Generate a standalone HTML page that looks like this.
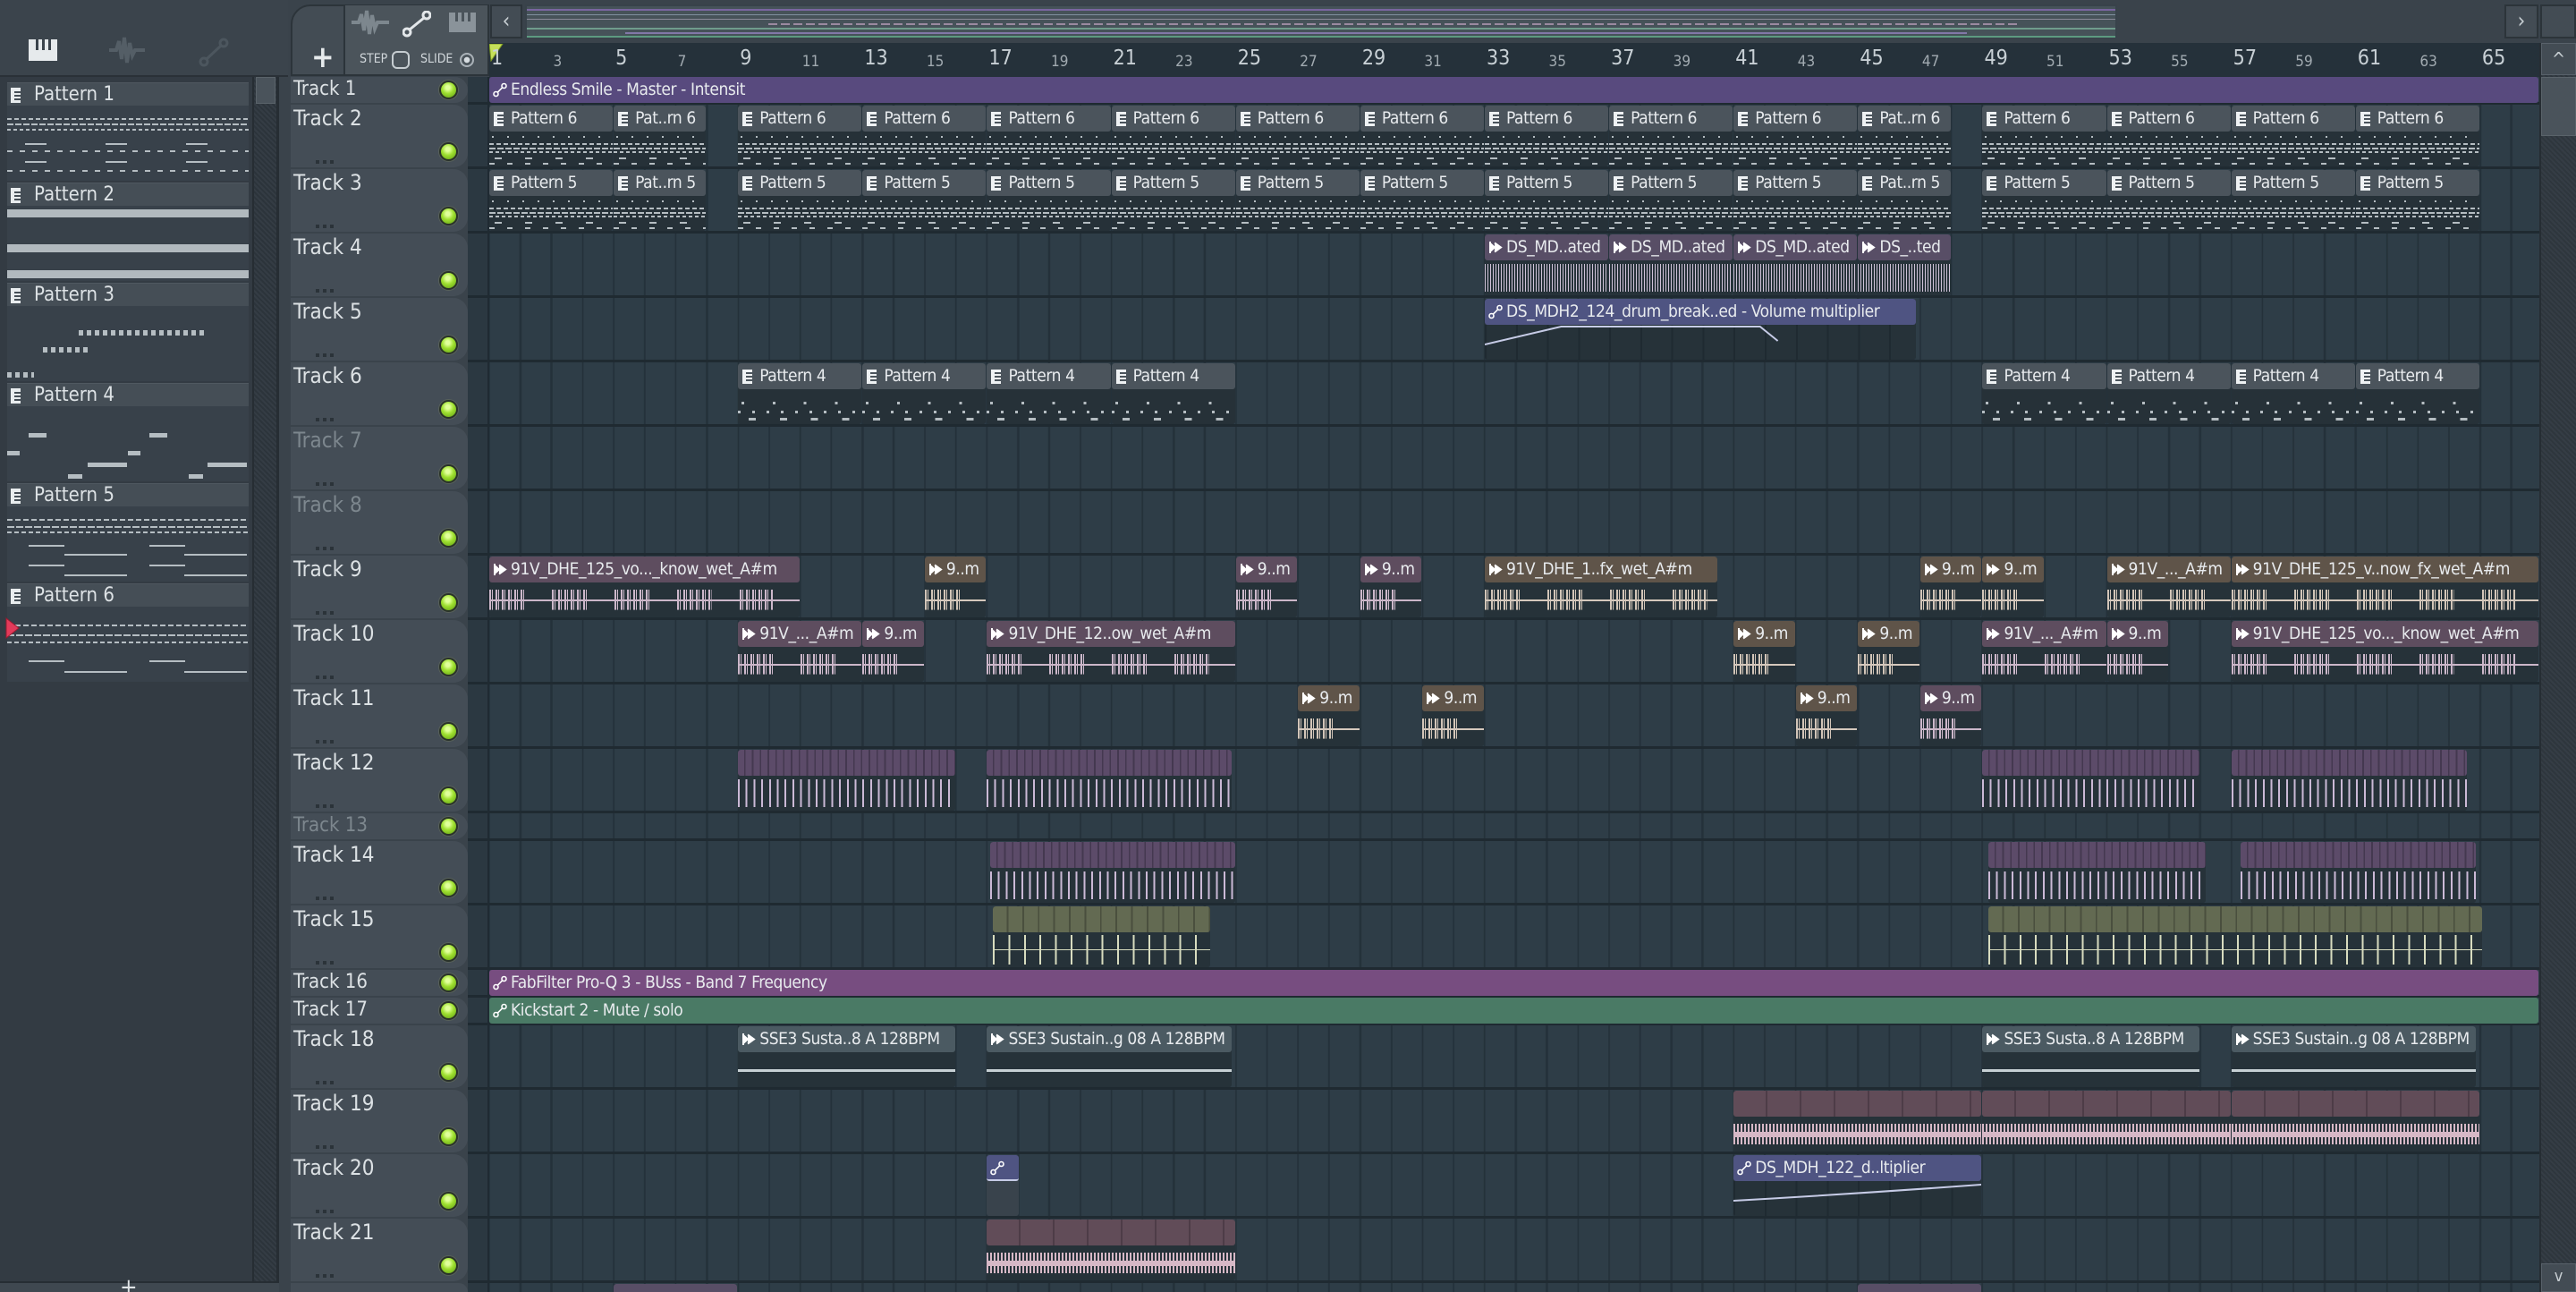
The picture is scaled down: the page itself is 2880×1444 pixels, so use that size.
<!DOCTYPE html>
<html><head><meta charset="utf-8">
<style>
*{box-sizing:border-box;margin:0;padding:0}
html{width:2880px;height:1444px;overflow:hidden}
body{width:2880px;height:1444px;overflow:hidden;background:#3a434b;position:relative;font-family:"DejaVu Sans Condensed","Liberation Sans Narrow","Liberation Sans",sans-serif;color:#dfe3e6}
.abs{position:absolute}
#lp{left:0;top:86px;width:282px;height:1346px;background:#333b43}
#lsb{left:282px;top:86px;width:30px;height:1346px;background:repeating-linear-gradient(45deg,#2c343b 0 2px,#343c44 2px 4px);border-left:2px solid #262d33;border-right:3px solid #262d33}
#lsb div{position:absolute;left:2px;top:0;width:22px;height:30px;background:#4a535b;border:1px solid #5a636a}
.pi{position:absolute;left:8px;width:270px}
.pi .ph{height:26px;background:#454e56;font-size:22px;line-height:26px;padding-left:30px;color:#dde2e5;position:relative;border-top:1px solid #4f5860}
.pi .pb{height:84px;background:#38414a}
.ico{position:absolute;left:4px;top:5px;width:11px;height:17px;background:linear-gradient(#454e56,#454e56) 4px 4px/7px 2px no-repeat,linear-gradient(#454e56,#454e56) 4px 8px/7px 2px no-repeat,linear-gradient(#454e56,#454e56) 4px 12px/7px 2px no-repeat,#e8ecee}
#grid{left:525px;top:86px;width:2314px;height:1358px;background:repeating-linear-gradient(90deg,#24313a 0 2px,transparent 2px 34.78px) 21px 0/100% 100%,#2e3d47}
#gstrip{left:523px;top:86px;width:24px;height:1358px;background:#2b3841;border-right:2px solid #1f2a32}
.r{position:absolute;left:0;width:2839px}
.sep{position:absolute;left:523px;right:0;bottom:0;height:3px;background:#1f2a31}
.th{position:absolute;left:325px;width:198px;top:0;bottom:2px;background:#444d56;border-radius:0 16px 16px 0}
.th b{font-weight:normal;position:absolute;left:3px;top:1px;font-size:24px;line-height:28px;color:#dce1e4;white-space:nowrap}
.th.g b{color:#7d878e}
.th i{position:absolute;left:28px;bottom:4px;width:22px;height:4px;background:repeating-linear-gradient(90deg,#2b3339 0 4px,transparent 4px 8px)}
.led{position:absolute;left:166px;bottom:7px;width:21px;height:21px;border-radius:50%;background:radial-gradient(circle at 45% 35%,#e0ff9a 0 15%,#9fe030 45%,#5d9a12 100%);border:2px solid #2a3329;box-shadow:0 0 0 1px #58615a}
.sm .led{bottom:4px}
.sm .th b{font-size:22px;top:0}
.c{position:absolute;left:calc(547px + (var(--a) - 1) * 34.78px);width:calc((var(--b) - var(--a)) * 34.78px - 1px);top:1px;bottom:3px;background:#263239;overflow:hidden;border-radius:3px}
.c .h{height:29px;line-height:29px;font-size:19px;letter-spacing:-0.4px;color:#e8ebee;white-space:nowrap;padding-left:24px;border-radius:3px;position:relative;overflow:hidden}
.c .h svg{position:absolute;left:4px;top:6px;width:16px;height:17px}
.bd{position:absolute;left:0;right:0;top:29px;bottom:0;background:repeating-linear-gradient(90deg,#1f2a31 0 2px,transparent 2px 34.78px)}
.p .h{background:#4b545c}
.p .bd{background:
repeating-linear-gradient(90deg,#b5bdc2 0 5px,transparent 5px 8px) 0 13px/100% 2px no-repeat,
repeating-linear-gradient(90deg,#b5bdc2 0 7px,transparent 7px 9px) 0 18px/100% 2px no-repeat,
repeating-linear-gradient(90deg,#b5bdc2 0 4px,transparent 4px 7px) 0 22px/100% 2px no-repeat,
repeating-linear-gradient(90deg,transparent 0 3px,#b5bdc2 3px 5px,transparent 5px 17px) 0 5px/100% 2px no-repeat,
repeating-linear-gradient(90deg,transparent 0 6px,#b5bdc2 6px 14px,transparent 14px 34px) 0 29px/100% 2px no-repeat,
repeating-linear-gradient(90deg,#b5bdc2 0 6px,transparent 6px 20px) 0 35px/100% 2px no-repeat,
#263138}
.p4 .bd{background:
repeating-linear-gradient(90deg,transparent 0 4px,#b5bdc2 4px 7px,transparent 7px 34.78px) 0 14px/100% 3px no-repeat,
repeating-linear-gradient(90deg,#b5bdc2 0 3px,transparent 3px 16px) 0 24px/100% 3px no-repeat,
repeating-linear-gradient(90deg,transparent 0 12px,#b5bdc2 12px 20px,transparent 20px 34.78px) 0 32px/100% 3px no-repeat,#263138}
.au .h{background:#5e4d5f}
.tan .h{background:#5f5449}
.ds .h{background:#584e66}
.w{background:linear-gradient(#cbb6c9,#cbb6c9) 0 50%/100% 2px no-repeat,repeating-linear-gradient(90deg,transparent 0 40px,#263239 40px 69.56px) 0 50%/100% 70% no-repeat,repeating-linear-gradient(90deg,#cdb8cb 0 2px,transparent 2px 3px,#cdb8cb 3px 4px,transparent 4px 7px) 0 50%/100% 58% no-repeat,#263239}
.tan .w{background:linear-gradient(#d5c8bc,#d5c8bc) 0 50%/100% 2px no-repeat,repeating-linear-gradient(90deg,transparent 0 40px,#263239 40px 69.56px) 0 50%/100% 70% no-repeat,repeating-linear-gradient(90deg,#d2c5b8 0 2px,transparent 2px 3px,#d2c5b8 3px 4px,transparent 4px 7px) 0 50%/100% 58% no-repeat,#263239}
.ds .w{background:repeating-linear-gradient(90deg,#cfc2d8 0 1px,transparent 1px 3px) 0 50%/100% 80% no-repeat,#263239}
.aut .h{background:#4f5482}
.sse .h{background:#4b5a62}
.sse .bd{background:linear-gradient(#c7d0d4,#c7d0d4) 0 19px/100% 3px no-repeat,#263239}
.seg .h{background:repeating-linear-gradient(90deg,#5c4b69 0 7px,#443850 7px 8.7px);padding:0}
.seg .bd{background:repeating-linear-gradient(90deg,#cbb9d6 0 2px,transparent 2px 8.7px) 0 50%/100% 80% no-repeat,#263239}
.ol .h{background:repeating-linear-gradient(90deg,#636a52 0 15.5px,#4a4f3e 15.5px 17.39px);padding:0}
.ol .bd{background:repeating-linear-gradient(90deg,#d8dcbf 0 2px,transparent 2px 17.39px) 0 50%/100% 85% no-repeat,linear-gradient(#d8dcbf,#d8dcbf) 0 50%/100% 1px no-repeat,#263239}
.pk .h{background:repeating-linear-gradient(90deg,#614c58 0 36px,#4d3c47 36px 38px);padding:0}
.pk .bd{background:repeating-linear-gradient(90deg,#d6b8c6 0 2px,transparent 2px 4px) 0 50%/100% 60% no-repeat,linear-gradient(#d6b8c6,#d6b8c6) 0 50%/100% 6px no-repeat,#263239}
.full{top:0;bottom:2px;border-radius:3px}
.full .h{height:100%;line-height:28px}
.ru{position:absolute;top:52px;left:calc(549px + (var(--n) - 1) * 34.78px);font-size:23px;color:#c8d0d5}
.ru.s{font-size:17px;top:59px;color:#a2abb1}
</style></head><body>
<svg width="0" height="0" style="position:absolute">
<defs>
<symbol id="ia" viewBox="0 0 16 17"><path d="M2 2V15M2 8.5H14M7 3.5L14 8.5L7 13.5M2 4L7 8.5L2 13" stroke="#fff" stroke-width="2" fill="#fff"/></symbol>
<symbol id="iu" viewBox="0 0 16 17"><circle cx="3.5" cy="13" r="2.5" stroke="#fff" stroke-width="1.6" fill="none"/><circle cx="12.5" cy="4" r="2.5" stroke="#fff" stroke-width="1.6" fill="none"/><path d="M5.3 11.2L10.7 5.8" stroke="#fff" stroke-width="1.6"/></symbol>
<symbol id="ip" viewBox="0 0 16 17"><rect x="1" y="1" width="11" height="16" fill="#eef1f3"/><path d="M5 5H12M5 9H12M5 13H12" stroke="#4b545c" stroke-width="2"/></symbol>
</defs></svg>

<div class="abs" style="left:0;top:0;width:2880px;height:48px;background:#3a434b"></div>
<div class="abs" style="left:0;top:0;width:322px;height:86px;background:#3b444c;border-bottom:2px solid #2a3137"></div>
<div class="abs" style="left:32px;top:44px;width:32px;height:24px;background:linear-gradient(#3b444c,#3b444c) 8px 0/3px 12px no-repeat,linear-gradient(#3b444c,#3b444c) 15px 0/3px 12px no-repeat,linear-gradient(#3b444c,#3b444c) 22px 0/3px 12px no-repeat,#e6eaec"></div>
<svg class="abs" style="left:120px;top:40px" width="44" height="32"><path d="M2 16H10L13 6L16 26L19 2L22 30L25 8L28 22L31 16H42" stroke="#545e66" stroke-width="4" fill="none"/></svg>
<svg class="abs" style="left:222px;top:42px" width="34" height="34"><circle cx="6" cy="27" r="4" stroke="#4c565e" stroke-width="3" fill="none"/><circle cx="28" cy="6" r="4" stroke="#4c565e" stroke-width="3" fill="none"/><path d="M9 24L25 9" stroke="#4c565e" stroke-width="3"/></svg>

<div class="abs" style="left:325px;top:5px;width:222px;height:80px;background:#434c54;border-radius:22px 0 0 0;border:2px solid #2c343a"></div>
<div class="abs" style="left:384px;top:6px;width:161px;height:77px;background:#4b545b;border-left:2px solid #2c343a"></div>
<div class="abs" style="left:348px;top:44px;font-size:34px;color:#e6eaec;font-weight:bold">+</div>
<svg class="abs" style="left:393px;top:10px" width="42" height="30"><path d="M0 15H8L11 6L14 24L17 2L20 28L23 7L26 22L29 15H42" stroke="#7d878e" stroke-width="4" fill="none"/></svg>
<svg class="abs" style="left:450px;top:12px" width="32" height="30"><circle cx="5" cy="24" r="4" stroke="#e3e7ea" stroke-width="3" fill="none"/><circle cx="27" cy="5" r="4" stroke="#e3e7ea" stroke-width="3" fill="none"/><path d="M8 21L24 8" stroke="#e3e7ea" stroke-width="3"/></svg>
<div class="abs" style="left:502px;top:14px;width:30px;height:22px;background:linear-gradient(#4b545b,#4b545b) 7px 0/3px 10px no-repeat,linear-gradient(#4b545b,#4b545b) 14px 0/3px 10px no-repeat,linear-gradient(#4b545b,#4b545b) 21px 0/3px 10px no-repeat,#8a939a"></div>
<div class="abs" style="left:402px;top:58px;font-size:14px;color:#d0d6da">STEP</div>
<div class="abs" style="left:438px;top:57px;width:20px;height:20px;border:2px solid #c6cdd1;border-radius:6px"></div>
<div class="abs" style="left:470px;top:58px;font-size:14px;color:#d0d6da">SLIDE</div>
<div class="abs" style="left:514px;top:59px;width:16px;height:16px;border:2px solid #aab2b8;border-radius:50%;background:radial-gradient(#d6dce0 0 3px,transparent 3.5px)"></div>

<div class="abs" style="left:548px;top:5px;width:36px;height:38px;background:#434c54;border:2px solid #2c343a;font-size:24px;line-height:32px;text-align:center;color:#c9d0d4">&lsaquo;</div>
<div class="abs" style="left:587px;top:5px;width:1780px;height:38px;background:#465259;border:2px solid #38424a">
 <div class="abs" style="left:0;top:3px;width:1776px;height:2px;background:#7a66a0"></div>
 <div class="abs" style="left:0;top:9px;width:1776px;height:1px;background:#8190a0"></div>
 <div class="abs" style="left:0;top:14px;width:1776px;height:1px;background:#8a8a9a"></div>
 <div class="abs" style="left:270px;top:19px;width:1400px;height:2px;background:repeating-linear-gradient(90deg,#9b8aa0 0 10px,transparent 10px 14px)"></div>
 <div class="abs" style="left:0;top:24px;width:1776px;height:2px;background:#6f9c8c"></div>
 <div class="abs" style="left:110px;top:29px;width:1500px;height:2px;background:#8278a8"></div>
 <div class="abs" style="left:0;top:33px;width:1776px;height:2px;background:#5d9a80"></div>
</div>
<div class="abs" style="left:2800px;top:5px;width:38px;height:38px;background:#434c54;border:2px solid #2c343a;font-size:24px;line-height:32px;text-align:center;color:#c9d0d4">&rsaquo;</div>
<div class="abs" style="left:2840px;top:5px;width:40px;height:38px;background:#434c54;border:2px solid #2c343a"></div>

<div class="abs" style="left:547px;top:48px;width:2292px;height:38px;background:#25313a"></div>
<svg class="abs" style="left:547px;top:49px" width="16" height="20"><path d="M0 0H15L2 19Z" fill="#c6e05a" stroke="#7d9a20"/></svg>
<span class="ru" style="--n:1">1</span><span class="ru s" style="--n:3">3</span><span class="ru" style="--n:5">5</span><span class="ru s" style="--n:7">7</span><span class="ru" style="--n:9">9</span><span class="ru s" style="--n:11">11</span><span class="ru" style="--n:13">13</span><span class="ru s" style="--n:15">15</span><span class="ru" style="--n:17">17</span><span class="ru s" style="--n:19">19</span><span class="ru" style="--n:21">21</span><span class="ru s" style="--n:23">23</span><span class="ru" style="--n:25">25</span><span class="ru s" style="--n:27">27</span><span class="ru" style="--n:29">29</span><span class="ru s" style="--n:31">31</span><span class="ru" style="--n:33">33</span><span class="ru s" style="--n:35">35</span><span class="ru" style="--n:37">37</span><span class="ru s" style="--n:39">39</span><span class="ru" style="--n:41">41</span><span class="ru s" style="--n:43">43</span><span class="ru" style="--n:45">45</span><span class="ru s" style="--n:47">47</span><span class="ru" style="--n:49">49</span><span class="ru s" style="--n:51">51</span><span class="ru" style="--n:53">53</span><span class="ru s" style="--n:55">55</span><span class="ru" style="--n:57">57</span><span class="ru s" style="--n:59">59</span><span class="ru" style="--n:61">61</span><span class="ru s" style="--n:63">63</span><span class="ru" style="--n:65">65</span>

<div class="abs" style="left:2839px;top:48px;width:41px;height:1396px;background:repeating-linear-gradient(45deg,#2e363d 0 2px,#353d45 2px 4px);border-left:2px solid #262d33"></div>
<div class="abs" style="left:2841px;top:48px;width:39px;height:36px;background:#434c54;border:1px solid #58616a;text-align:center;font-size:20px;line-height:34px;color:#c9d0d4">^</div>
<div class="abs" style="left:2841px;top:86px;width:39px;height:66px;background:#4a535b;border:1px solid #5a636a"></div>
<div class="abs" style="left:2841px;top:1412px;width:39px;height:32px;background:#434c54;border:1px solid #58616a;text-align:center;font-size:18px;line-height:28px;color:#c9d0d4">v</div>

<div id="lp" class="abs"></div>
<div id="lsb" class="abs"><div></div></div>
<div class="abs" style="left:0;top:1432px;width:312px;height:12px;background:#3f4850;border-top:2px solid #262d33"></div>
<div class="abs" style="left:134px;top:1424px;font-size:26px;color:#dfe3e6">+</div>

<div class="pi" style="top:92px"><div class="ph"><span class="ico"></span>Pattern 1</div><div class="pb" style="background:
repeating-linear-gradient(90deg,#b5bdc2 0 5px,transparent 5px 8px) 0 14px/100% 2px no-repeat,
repeating-linear-gradient(90deg,#b5bdc2 0 7px,transparent 7px 9px) 0 20px/100% 2px no-repeat,
repeating-linear-gradient(90deg,#b5bdc2 0 4px,transparent 4px 7px) 0 26px/100% 2px no-repeat,
repeating-linear-gradient(90deg,transparent 0 20px,#b5bdc2 20px 44px,transparent 44px 90px) 0 42px/100% 2px no-repeat,
repeating-linear-gradient(90deg,#b5bdc2 0 6px,transparent 6px 14px) 0 50px/100% 2px no-repeat,
repeating-linear-gradient(90deg,transparent 0 20px,#b5bdc2 20px 44px,transparent 44px 90px) 0 62px/100% 2px no-repeat,
repeating-linear-gradient(90deg,#b5bdc2 0 6px,transparent 6px 14px) 0 72px/100% 2px no-repeat,#38414a"></div></div>
<div class="pi" style="top:204px"><div class="ph"><span class="ico"></span>Pattern 2</div><div class="pb" style="background:linear-gradient(#b1b9be,#b1b9be) 0 4px/100% 9px no-repeat,linear-gradient(#b1b9be,#b1b9be) 0 43px/100% 9px no-repeat,linear-gradient(#b1b9be,#b1b9be) 0 72px/100% 9px no-repeat,#38414a"></div></div>
<div class="pi" style="top:316px"><div class="ph"><span class="ico"></span>Pattern 3</div><div class="pb" style="background:repeating-linear-gradient(90deg,#b5bdc2 0 5px,transparent 5px 9px) 80px 27px/140px 6px no-repeat,repeating-linear-gradient(90deg,#b5bdc2 0 5px,transparent 5px 9px) 40px 46px/50px 6px no-repeat,repeating-linear-gradient(90deg,#b5bdc2 0 5px,transparent 5px 9px) 0 74px/30px 6px no-repeat,#38414a"></div></div>
<div class="pi" style="top:428px"><div class="ph"><span class="ico"></span>Pattern 4</div><div class="pb" style="background:repeating-linear-gradient(90deg,transparent 0 24px,#b5bdc2 24px 44px,transparent 44px 135px) 0 30px/100% 5px no-repeat,repeating-linear-gradient(90deg,#b5bdc2 0 14px,transparent 14px 135px) 0 50px/100% 5px no-repeat,repeating-linear-gradient(90deg,transparent 0 90px,#b5bdc2 90px 134px) 0 63px/100% 5px no-repeat,repeating-linear-gradient(90deg,transparent 0 68px,#b5bdc2 68px 84px,transparent 84px 135px) 0 76px/100% 5px no-repeat,#38414a"></div></div>
<div class="pi" style="top:540px"><div class="ph"><span class="ico"></span>Pattern 5</div><div class="pb" style="background:
repeating-linear-gradient(90deg,#b5bdc2 0 6px,transparent 6px 9px) 0 14px/100% 2px no-repeat,
repeating-linear-gradient(90deg,#b5bdc2 0 8px,transparent 8px 10px) 0 22px/100% 2px no-repeat,
repeating-linear-gradient(90deg,#b5bdc2 0 5px,transparent 5px 8px) 0 28px/100% 2px no-repeat,
repeating-linear-gradient(90deg,transparent 0 24px,#b5bdc2 24px 64px,transparent 64px 135px) 0 43px/100% 2px no-repeat,
repeating-linear-gradient(90deg,transparent 0 64px,#b5bdc2 64px 134px) 0 53px/100% 2px no-repeat,
repeating-linear-gradient(90deg,transparent 0 24px,#b5bdc2 24px 64px,transparent 64px 135px) 0 65px/100% 2px no-repeat,
repeating-linear-gradient(90deg,transparent 0 64px,#b5bdc2 64px 134px) 0 76px/100% 2px no-repeat,#38414a"></div></div>
<div class="pi" style="top:652px"><div class="ph"><span class="ico"></span>Pattern 6</div><div class="pb" style="background:
repeating-linear-gradient(90deg,#b5bdc2 0 6px,transparent 6px 9px) 0 20px/100% 2px no-repeat,
repeating-linear-gradient(90deg,#b5bdc2 0 8px,transparent 8px 10px) 0 31px/100% 2px no-repeat,
repeating-linear-gradient(90deg,#b5bdc2 0 5px,transparent 5px 8px) 0 39px/100% 2px no-repeat,
repeating-linear-gradient(90deg,transparent 0 24px,#b5bdc2 24px 64px,transparent 64px 135px) 0 60px/100% 2px no-repeat,
repeating-linear-gradient(90deg,transparent 0 64px,#b5bdc2 64px 134px) 0 72px/100% 2px no-repeat,#38414a"></div></div>
<svg class="abs" style="left:6px;top:690px" width="16" height="24"><path d="M1 1L15 12L1 23Z" fill="#e33a5a" stroke="#9a1a30"/></svg>

<div id="grid" class="abs"></div>
<div id="gstrip" class="abs"></div>

<div class="r sm" style="top:86px;height:31px"><div class="th"><b>Track 1</b><span class="led"></span></div><div class="sep"></div>
<div class="c full" style="--a:1;--b:66.9;background:#584a7e"><div class="h"><svg><use href="#iu"/></svg>Endless Smile - Master - Intensit</div></div></div>
<div class="r" style="top:117px;height:72px"><div class="th"><b>Track 2</b><i></i><span class="led"></span></div><div class="sep"></div>
<div class="c p" style="--a:1;--b:5"><div class="h"><svg><use href="#ip"/></svg>Pattern 6</div><div class="bd"></div></div>
<div class="c p" style="--a:5;--b:8"><div class="h"><svg><use href="#ip"/></svg>Pat..rn 6</div><div class="bd"></div></div>
<div class="c p" style="--a:9;--b:13"><div class="h"><svg><use href="#ip"/></svg>Pattern 6</div><div class="bd"></div></div>
<div class="c p" style="--a:13;--b:17"><div class="h"><svg><use href="#ip"/></svg>Pattern 6</div><div class="bd"></div></div>
<div class="c p" style="--a:17;--b:21"><div class="h"><svg><use href="#ip"/></svg>Pattern 6</div><div class="bd"></div></div>
<div class="c p" style="--a:21;--b:25"><div class="h"><svg><use href="#ip"/></svg>Pattern 6</div><div class="bd"></div></div>
<div class="c p" style="--a:25;--b:29"><div class="h"><svg><use href="#ip"/></svg>Pattern 6</div><div class="bd"></div></div>
<div class="c p" style="--a:29;--b:33"><div class="h"><svg><use href="#ip"/></svg>Pattern 6</div><div class="bd"></div></div>
<div class="c p" style="--a:33;--b:37"><div class="h"><svg><use href="#ip"/></svg>Pattern 6</div><div class="bd"></div></div>
<div class="c p" style="--a:37;--b:41"><div class="h"><svg><use href="#ip"/></svg>Pattern 6</div><div class="bd"></div></div>
<div class="c p" style="--a:41;--b:45"><div class="h"><svg><use href="#ip"/></svg>Pattern 6</div><div class="bd"></div></div>
<div class="c p" style="--a:45;--b:48"><div class="h"><svg><use href="#ip"/></svg>Pat..rn 6</div><div class="bd"></div></div>
<div class="c p" style="--a:49;--b:53"><div class="h"><svg><use href="#ip"/></svg>Pattern 6</div><div class="bd"></div></div>
<div class="c p" style="--a:53;--b:57"><div class="h"><svg><use href="#ip"/></svg>Pattern 6</div><div class="bd"></div></div>
<div class="c p" style="--a:57;--b:61"><div class="h"><svg><use href="#ip"/></svg>Pattern 6</div><div class="bd"></div></div>
<div class="c p" style="--a:61;--b:65"><div class="h"><svg><use href="#ip"/></svg>Pattern 6</div><div class="bd"></div></div>
</div>
<div class="r" style="top:189px;height:72px"><div class="th"><b>Track 3</b><i></i><span class="led"></span></div><div class="sep"></div>
<div class="c p" style="--a:1;--b:5"><div class="h"><svg><use href="#ip"/></svg>Pattern 5</div><div class="bd"></div></div>
<div class="c p" style="--a:5;--b:8"><div class="h"><svg><use href="#ip"/></svg>Pat..rn 5</div><div class="bd"></div></div>
<div class="c p" style="--a:9;--b:13"><div class="h"><svg><use href="#ip"/></svg>Pattern 5</div><div class="bd"></div></div>
<div class="c p" style="--a:13;--b:17"><div class="h"><svg><use href="#ip"/></svg>Pattern 5</div><div class="bd"></div></div>
<div class="c p" style="--a:17;--b:21"><div class="h"><svg><use href="#ip"/></svg>Pattern 5</div><div class="bd"></div></div>
<div class="c p" style="--a:21;--b:25"><div class="h"><svg><use href="#ip"/></svg>Pattern 5</div><div class="bd"></div></div>
<div class="c p" style="--a:25;--b:29"><div class="h"><svg><use href="#ip"/></svg>Pattern 5</div><div class="bd"></div></div>
<div class="c p" style="--a:29;--b:33"><div class="h"><svg><use href="#ip"/></svg>Pattern 5</div><div class="bd"></div></div>
<div class="c p" style="--a:33;--b:37"><div class="h"><svg><use href="#ip"/></svg>Pattern 5</div><div class="bd"></div></div>
<div class="c p" style="--a:37;--b:41"><div class="h"><svg><use href="#ip"/></svg>Pattern 5</div><div class="bd"></div></div>
<div class="c p" style="--a:41;--b:45"><div class="h"><svg><use href="#ip"/></svg>Pattern 5</div><div class="bd"></div></div>
<div class="c p" style="--a:45;--b:48"><div class="h"><svg><use href="#ip"/></svg>Pat..rn 5</div><div class="bd"></div></div>
<div class="c p" style="--a:49;--b:53"><div class="h"><svg><use href="#ip"/></svg>Pattern 5</div><div class="bd"></div></div>
<div class="c p" style="--a:53;--b:57"><div class="h"><svg><use href="#ip"/></svg>Pattern 5</div><div class="bd"></div></div>
<div class="c p" style="--a:57;--b:61"><div class="h"><svg><use href="#ip"/></svg>Pattern 5</div><div class="bd"></div></div>
<div class="c p" style="--a:61;--b:65"><div class="h"><svg><use href="#ip"/></svg>Pattern 5</div><div class="bd"></div></div>
</div>
<div class="r" style="top:261px;height:72px"><div class="th"><b>Track 4</b><i></i><span class="led"></span></div><div class="sep"></div>
<div class="c ds" style="--a:33;--b:37"><div class="h"><svg><use href="#ia"/></svg>DS_MD..ated</div><div class="bd w"></div></div>
<div class="c ds" style="--a:37;--b:41"><div class="h"><svg><use href="#ia"/></svg>DS_MD..ated</div><div class="bd w"></div></div>
<div class="c ds" style="--a:41;--b:45"><div class="h"><svg><use href="#ia"/></svg>DS_MD..ated</div><div class="bd w"></div></div>
<div class="c ds" style="--a:45;--b:48"><div class="h"><svg><use href="#ia"/></svg>DS_..ted</div><div class="bd w"></div></div>
</div>
<div class="r" style="top:333px;height:72px"><div class="th"><b>Track 5</b><i></i><span class="led"></span></div><div class="sep"></div>
<div class="c aut" style="--a:33;--b:46.9"><div class="h"><svg><use href="#iu"/></svg>DS_MDH2_124_drum_break..ed - Volume multiplier</div><div class="bd"><svg width="100%" height="40" viewBox="0 0 486 40" preserveAspectRatio="none"><polyline points="0,22 86,2 310,2 330,18" stroke="#c6cbe6" stroke-width="2" fill="none"/></svg></div></div>
</div>
<div class="r" style="top:405px;height:72px"><div class="th"><b>Track 6</b><i></i><span class="led"></span></div><div class="sep"></div>
<div class="c p p4" style="--a:9;--b:13"><div class="h"><svg><use href="#ip"/></svg>Pattern 4</div><div class="bd"></div></div>
<div class="c p p4" style="--a:13;--b:17"><div class="h"><svg><use href="#ip"/></svg>Pattern 4</div><div class="bd"></div></div>
<div class="c p p4" style="--a:17;--b:21"><div class="h"><svg><use href="#ip"/></svg>Pattern 4</div><div class="bd"></div></div>
<div class="c p p4" style="--a:21;--b:25"><div class="h"><svg><use href="#ip"/></svg>Pattern 4</div><div class="bd"></div></div>
<div class="c p p4" style="--a:49;--b:53"><div class="h"><svg><use href="#ip"/></svg>Pattern 4</div><div class="bd"></div></div>
<div class="c p p4" style="--a:53;--b:57"><div class="h"><svg><use href="#ip"/></svg>Pattern 4</div><div class="bd"></div></div>
<div class="c p p4" style="--a:57;--b:61"><div class="h"><svg><use href="#ip"/></svg>Pattern 4</div><div class="bd"></div></div>
<div class="c p p4" style="--a:61;--b:65"><div class="h"><svg><use href="#ip"/></svg>Pattern 4</div><div class="bd"></div></div>
</div>
<div class="r" style="top:477px;height:72px"><div class="th g"><b>Track 7</b><i></i><span class="led"></span></div><div class="sep"></div></div>
<div class="r" style="top:549px;height:72px"><div class="th g"><b>Track 8</b><i></i><span class="led"></span></div><div class="sep"></div></div>
<div class="r" style="top:621px;height:72px"><div class="th"><b>Track 9</b><i></i><span class="led"></span></div><div class="sep"></div>
<div class="c au" style="--a:1;--b:11"><div class="h"><svg><use href="#ia"/></svg>91V_DHE_125_vo..._know_wet_A#m</div><div class="bd w"></div></div>
<div class="c tan" style="--a:15;--b:17"><div class="h"><svg><use href="#ia"/></svg>9..m</div><div class="bd w"></div></div>
<div class="c au" style="--a:25;--b:27"><div class="h"><svg><use href="#ia"/></svg>9..m</div><div class="bd w"></div></div>
<div class="c au" style="--a:29;--b:31"><div class="h"><svg><use href="#ia"/></svg>9..m</div><div class="bd w"></div></div>
<div class="c tan" style="--a:33;--b:40.5"><div class="h"><svg><use href="#ia"/></svg>91V_DHE_1..fx_wet_A#m</div><div class="bd w"></div></div>
<div class="c tan" style="--a:47;--b:49"><div class="h"><svg><use href="#ia"/></svg>9..m</div><div class="bd w"></div></div>
<div class="c tan" style="--a:49;--b:51"><div class="h"><svg><use href="#ia"/></svg>9..m</div><div class="bd w"></div></div>
<div class="c tan" style="--a:53;--b:57"><div class="h"><svg><use href="#ia"/></svg>91V_..._A#m</div><div class="bd w"></div></div>
<div class="c tan" style="--a:57;--b:66.9"><div class="h"><svg><use href="#ia"/></svg>91V_DHE_125_v..now_fx_wet_A#m</div><div class="bd w"></div></div>
</div>
<div class="r" style="top:693px;height:72px"><div class="th"><b>Track 10</b><i></i><span class="led"></span></div><div class="sep"></div>
<div class="c au" style="--a:9;--b:13"><div class="h"><svg><use href="#ia"/></svg>91V_..._A#m</div><div class="bd w"></div></div>
<div class="c au" style="--a:13;--b:15"><div class="h"><svg><use href="#ia"/></svg>9..m</div><div class="bd w"></div></div>
<div class="c au" style="--a:17;--b:25"><div class="h"><svg><use href="#ia"/></svg>91V_DHE_12..ow_wet_A#m</div><div class="bd w"></div></div>
<div class="c tan" style="--a:41;--b:43"><div class="h"><svg><use href="#ia"/></svg>9..m</div><div class="bd w"></div></div>
<div class="c tan" style="--a:45;--b:47"><div class="h"><svg><use href="#ia"/></svg>9..m</div><div class="bd w"></div></div>
<div class="c au" style="--a:49;--b:53"><div class="h"><svg><use href="#ia"/></svg>91V_..._A#m</div><div class="bd w"></div></div>
<div class="c au" style="--a:53;--b:55"><div class="h"><svg><use href="#ia"/></svg>9..m</div><div class="bd w"></div></div>
<div class="c au" style="--a:57;--b:66.9"><div class="h"><svg><use href="#ia"/></svg>91V_DHE_125_vo..._know_wet_A#m</div><div class="bd w"></div></div>
</div>
<div class="r" style="top:765px;height:72px"><div class="th"><b>Track 11</b><i></i><span class="led"></span></div><div class="sep"></div>
<div class="c tan" style="--a:27;--b:29"><div class="h"><svg><use href="#ia"/></svg>9..m</div><div class="bd w"></div></div>
<div class="c tan" style="--a:31;--b:33"><div class="h"><svg><use href="#ia"/></svg>9..m</div><div class="bd w"></div></div>
<div class="c tan" style="--a:43;--b:45"><div class="h"><svg><use href="#ia"/></svg>9..m</div><div class="bd w"></div></div>
<div class="c au" style="--a:47;--b:49"><div class="h"><svg><use href="#ia"/></svg>9..m</div><div class="bd w"></div></div>
</div>
<div class="r" style="top:837px;height:72px"><div class="th"><b>Track 12</b><i></i><span class="led"></span></div><div class="sep"></div>
<div class="c seg" style="--a:9;--b:16"><div class="h"></div><div class="bd"></div></div>
<div class="c seg" style="--a:17;--b:24.9"><div class="h"></div><div class="bd"></div></div>
<div class="c seg" style="--a:49;--b:56"><div class="h"></div><div class="bd"></div></div>
<div class="c seg" style="--a:57;--b:64.6"><div class="h"></div><div class="bd"></div></div>
</div>
<div class="r sm" style="top:909px;height:31px"><div class="th g"><b>Track 13</b><span class="led"></span></div><div class="sep"></div></div>
<div class="r" style="top:940px;height:72px"><div class="th"><b>Track 14</b><i></i><span class="led"></span></div><div class="sep"></div>
<div class="c seg" style="--a:17.1;--b:25"><div class="h"></div><div class="bd"></div></div>
<div class="c seg" style="--a:49.2;--b:56.2"><div class="h"></div><div class="bd"></div></div>
<div class="c seg" style="--a:57.3;--b:64.9"><div class="h"></div><div class="bd"></div></div>
</div>
<div class="r" style="top:1012px;height:72px"><div class="th"><b>Track 15</b><i></i><span class="led"></span></div><div class="sep"></div>
<div class="c ol" style="--a:17.2;--b:24.2"><div class="h"></div><div class="bd"></div></div>
<div class="c ol" style="--a:49.2;--b:65.1"><div class="h"></div><div class="bd"></div></div>
</div>
<div class="r sm" style="top:1084px;height:31px"><div class="th"><b>Track 16</b><span class="led"></span></div><div class="sep"></div>
<div class="c full" style="--a:1;--b:66.9;background:#774d80"><div class="h"><svg><use href="#iu"/></svg>FabFilter Pro-Q 3 - BUss - Band 7 Frequency</div></div></div>
<div class="r sm" style="top:1115px;height:31px"><div class="th"><b>Track 17</b><span class="led"></span></div><div class="sep"></div>
<div class="c full" style="--a:1;--b:66.9;background:#4a7a65"><div class="h"><svg><use href="#iu"/></svg>Kickstart 2 - Mute / solo</div></div></div>
<div class="r" style="top:1146px;height:72px"><div class="th"><b>Track 18</b><i></i><span class="led"></span></div><div class="sep"></div>
<div class="c sse" style="--a:9;--b:16"><div class="h"><svg><use href="#ia"/></svg>SSE3 Susta..8 A 128BPM</div><div class="bd"></div></div>
<div class="c sse" style="--a:17;--b:24.9"><div class="h"><svg><use href="#ia"/></svg>SSE3 Sustain..g 08 A 128BPM</div><div class="bd"></div></div>
<div class="c sse" style="--a:49;--b:56"><div class="h"><svg><use href="#ia"/></svg>SSE3 Susta..8 A 128BPM</div><div class="bd"></div></div>
<div class="c sse" style="--a:57;--b:64.9"><div class="h"><svg><use href="#ia"/></svg>SSE3 Sustain..g 08 A 128BPM</div><div class="bd"></div></div>
</div>
<div class="r" style="top:1218px;height:72px"><div class="th"><b>Track 19</b><i></i><span class="led"></span></div><div class="sep"></div>
<div class="c pk" style="--a:41;--b:49"><div class="h"></div><div class="bd"></div></div>
<div class="c pk" style="--a:49;--b:57"><div class="h"></div><div class="bd"></div></div>
<div class="c pk" style="--a:57;--b:65"><div class="h"></div><div class="bd"></div></div>
</div>
<div class="r" style="top:1290px;height:72px"><div class="th"><b>Track 20</b><i></i><span class="led"></span></div><div class="sep"></div>
<div class="c aut" style="--a:17;--b:18.05;background:#39434c"><div class="h" style="border-bottom:2px solid #c6cbe6"><svg><use href="#iu"/></svg></div></div>
<div class="c aut" style="--a:41;--b:49"><div class="h"><svg><use href="#iu"/></svg>DS_MDH_122_d..ltiplier</div><div class="bd"><svg width="100%" height="40" viewBox="0 0 277 40" preserveAspectRatio="none"><path d="M0 22Q140 14 277 4" stroke="#c6cbe6" stroke-width="2" fill="none"/></svg></div></div>
</div>
<div class="r" style="top:1362px;height:72px"><div class="th"><b>Track 21</b><i></i><span class="led"></span></div><div class="sep"></div>
<div class="c pk" style="--a:17;--b:25"><div class="h"></div><div class="bd"></div></div>
</div>
<div class="r" style="top:1434px;height:10px;overflow:hidden"><div class="th" style="bottom:auto;height:20px"></div>
<div class="c ds" style="--a:5;--b:9;bottom:auto;height:20px"><div class="h"></div></div>
<div class="c ds" style="--a:45;--b:49;bottom:auto;height:20px"><div class="h"></div></div>
</div>
</body></html>
